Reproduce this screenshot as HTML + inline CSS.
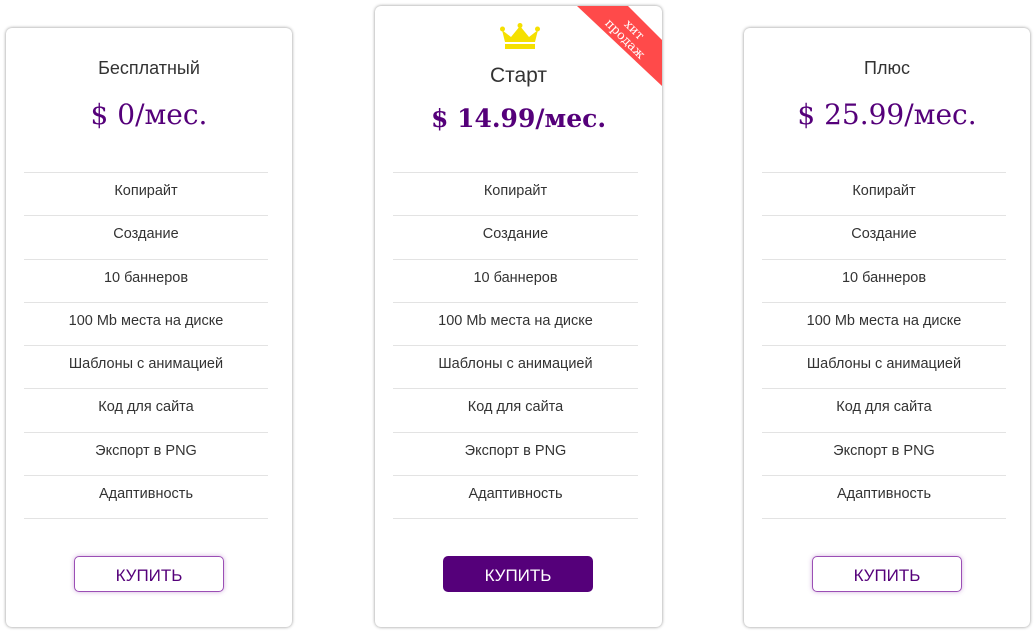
<!DOCTYPE html>
<html><head><meta charset="utf-8"><style>
body{margin:0;width:1036px;height:632px;background:#fff;position:relative;overflow:hidden;font-family:"Liberation Sans","DejaVu Sans",sans-serif;}
.card{position:absolute;background:#fff;border-radius:6px;box-shadow:0 0 3px rgba(0,0,0,.45);overflow:hidden}
.t{position:absolute;left:0;right:0;text-align:center;color:#333;font-size:18px}
.p{position:absolute;left:0;right:0;text-align:center;color:#55007a;font-family:"DejaVu Serif",serif;font-size:28px}
.row{position:absolute;left:18px;right:24px;height:43px;border-top:1px solid #e3e3e3;text-align:center;font-size:14.5px;color:#333;line-height:36px}
.last{position:absolute;left:18px;right:24px;border-top:1px solid #e3e3e3}
.btn{position:absolute;width:148px;height:34px;border:1px solid #9b4fb5;border-radius:5px;box-shadow:0 0 5px rgba(155,79,181,.45);text-align:center;line-height:37px;font-size:17px;color:#55007a}
</style></head><body>

<div class="card" style="left:6px;top:28px;width:286px;height:599px">
<div class="t" style="top:30px">Бесплатный</div>
<div class="p" style="top:70px">$ 0/мес.</div>
<div class="row" style="top:144px">Копирайт</div>
<div class="row" style="top:187px">Создание</div>
<div class="row" style="top:231px">10 баннеров</div>
<div class="row" style="top:274px">100 Mb места на диске</div>
<div class="row" style="top:317px">Шаблоны с анимацией</div>
<div class="row" style="top:360px">Код для сайта</div>
<div class="row" style="top:404px">Экспорт в PNG</div>
<div class="row" style="top:447px">Адаптивность</div>
<div class="last" style="top:490px"></div>
<div class="btn" style="left:68px;top:528px">КУПИТЬ</div>
</div>

<div class="card" style="left:375px;top:6px;width:287px;height:621px">
<svg style="position:absolute;left:125px;top:17px" width="40" height="28" viewBox="0 0 40 28"><path d="M2 7 L11 14 L20 3 L29 14 L38 7 L35 19 L5 19 Z" fill="#f5e000"/><circle cx="2.5" cy="6" r="2.5" fill="#f5e000"/><circle cx="20" cy="2.5" r="2.5" fill="#f5e000"/><circle cx="37.5" cy="6" r="2.5" fill="#f5e000"/><rect x="5" y="21" width="30" height="5" fill="#f5e000"/></svg>
<svg style="position:absolute;left:0;top:0" width="287" height="90"><polygon points="202,0 253,0 287,34 287,80" fill="#ff4a4a"/></svg>
<div style="position:absolute;left:221px;top:15px;width:68px;height:26px;transform:rotate(45deg);color:#fff;font-family:'DejaVu Serif',serif;font-size:12.5px;line-height:13px;text-align:center">хит<br>продаж</div>
<div class="t" style="top:58px;font-size:21px">Старт</div>
<div class="p" style="top:98px;font-weight:bold;font-size:25px">$ 14.99/мес.</div>
<div class="row" style="top:166px">Копирайт</div>
<div class="row" style="top:209px">Создание</div>
<div class="row" style="top:253px">10 баннеров</div>
<div class="row" style="top:296px">100 Mb места на диске</div>
<div class="row" style="top:339px">Шаблоны с анимацией</div>
<div class="row" style="top:382px">Код для сайта</div>
<div class="row" style="top:426px">Экспорт в PNG</div>
<div class="row" style="top:469px">Адаптивность</div>
<div class="last" style="top:512px"></div>
<div class="btn" style="left:68px;top:550px;background:#55007a;color:#fff;border-color:#55007a;box-shadow:none">КУПИТЬ</div>
</div>

<div class="card" style="left:744px;top:28px;width:286px;height:599px">
<div class="t" style="top:30px">Плюс</div>
<div class="p" style="top:70px">$ 25.99/мес.</div>
<div class="row" style="top:144px">Копирайт</div>
<div class="row" style="top:187px">Создание</div>
<div class="row" style="top:231px">10 баннеров</div>
<div class="row" style="top:274px">100 Mb места на диске</div>
<div class="row" style="top:317px">Шаблоны с анимацией</div>
<div class="row" style="top:360px">Код для сайта</div>
<div class="row" style="top:404px">Экспорт в PNG</div>
<div class="row" style="top:447px">Адаптивность</div>
<div class="last" style="top:490px"></div>
<div class="btn" style="left:68px;top:528px">КУПИТЬ</div>
</div>

</body></html>
